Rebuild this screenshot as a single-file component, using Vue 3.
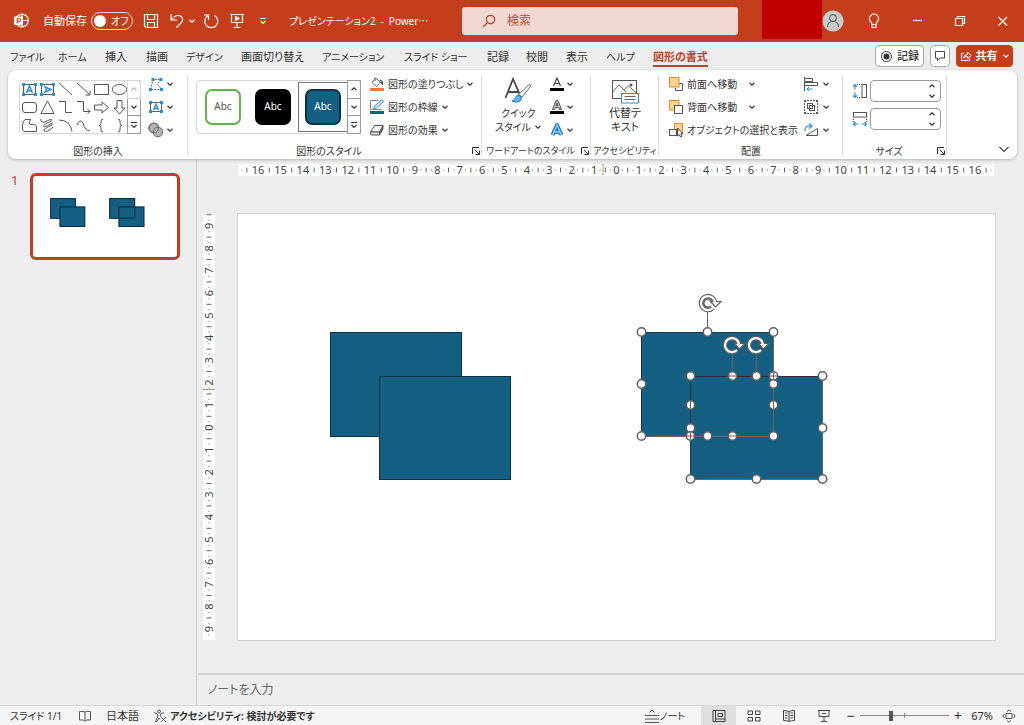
<script setup>
import { ref } from 'vue'

const autosave = ref(false)
const search = ref('')
const shapeHeight = ref('')
const shapeWidth = ref('')
const zoom = ref(38)

const tabs = [
  { name: 'ファイル', kana: true },
  { name: 'ホーム', kana: true },
  { name: '挿入' },
  { name: '描画' },
  { name: 'デザイン', kana: true },
  { name: '画面切り替え' },
  { name: 'アニメーション', kana: true },
  { name: 'スライド ショー', kana: true },
  { name: '記録' },
  { name: '校閲' },
  { name: '表示' },
  { name: 'ヘルプ', kana: true },
  { name: '図形の書式', active: true },
]

const shapeIcons = [
  { name: 'テキスト ボックス', box: 'A' },
  { name: '縦書きテキスト ボックス', box: 'V' },
  { name: '線', d: 'M2 2L15 14' },
  { name: '線矢印', d: 'M2 2L15 14M15 9.500V14H10.500' },
  { name: '正方形/長方形', d: 'M1.500 3.500H15.500V13.500H1.500Z' },
  { name: '楕円', d: 'M1.500 8.500A7 5 0 1 0 15.500 8.500A7 5 0 1 0 1.500 8.500Z' },
  { name: '角丸四角形', d: 'M4 3.500H13Q15.500 3.500 15.500 6V11Q15.500 13.500 13 13.500H4Q1.500 13.500 1.500 11V6Q1.500 3.500 4 3.500Z' },
  { name: '二等辺三角形', d: 'M8.500 2L15 14.500H2Z' },
  { name: 'カギ線コネクタ', d: 'M2 2.500H8.500V13.500H15' },
  { name: 'カギ線矢印コネクタ', d: 'M2 2.500H8.500V12.500H15M12.500 10L15 12.500L12.500 15' },
  { name: '右矢印', d: 'M1.500 6H9V3L15.500 8.500L9 14V11H1.500Z' },
  { name: '下矢印', d: 'M6 1.500H11V9H14L8.500 15L3 9H6Z' },
  { name: 'フリーフォーム', d: 'M4 2.500H9.500Q6.500 7 10 7.500Q15.500 7 15.500 10V14.500H4Q1.500 14.500 1.500 12V8Q1.500 5 4 2.500Z' },
  { name: 'フリーハンド', d: 'M2 2Q1 6 6 5Q11 2 12.500 2.500Q14 4 8 6Q3 9 5 10Q9 9 12 6.500Q14 6 13 8Q4 12 5 14Q8 16 14 10' },
  { name: '円弧', d: 'M2 3Q13 3 15 14.500' },
  { name: '曲線', d: 'M2 8Q5 1 8 6Q10 14 15 14' },
  { name: '左中かっこ', d: 'M10 2Q8 2 8 4V6Q8 8.500 6 8.500Q8 8.500 8 11V13Q8 15 10 15' },
  { name: '右中かっこ', d: 'M7 2Q9 2 9 4V6Q9 8.500 11 8.500Q9 8.500 9 11V13Q9 15 7 15' },
]

const baseShapes = [
  { x: 93, y: 119, w: 131, h: 104 },
  { x: 142, y: 163, w: 131, h: 103 },
  { x: 404, y: 119, w: 132, h: 104 },
  { x: 453, y: 163, w: 132, h: 103 },
  { x: 453, y: 163, w: 83, h: 60 },
]

const handles = [
  [404, 119], [470, 119], [536, 119], [404, 171], [404, 223],
  [453, 163], [495, 163, 'h'], [519, 163], [536, 163, 'p'], [536, 171], [585, 163],
  [453, 192, 'v'], [536, 192, 'v'], [453, 215], [453, 223, 'p'], [470, 223],
  [495, 223, 'h'], [536, 223], [585, 215], [453, 266], [519, 266], [585, 266],
]

const unit = 22.4
const hNumbers = Array.from({ length: 33 }, (_, i) => i - 16)
const vNumbers = Array.from({ length: 19 }, (_, i) => i - 9)
</script>

<template>
  <div class="app" lang="ja">
    <svg class="defs" aria-hidden="true">
      <defs>
        <symbol id="chev" viewBox="0 0 8 8"><path d="M1.500 2.800L4 5.200L6.500 2.800" fill="none" stroke="currentColor" stroke-width="1.200" /></symbol>
        <symbol id="chev-up" viewBox="0 0 8 8"><path d="M1.500 5.200L4 2.800L6.500 5.200" fill="none" stroke="currentColor" stroke-width="1.200" /></symbol>
        <symbol id="more" viewBox="0 0 8 8"><path d="M1 1.500H7M1.500 4L4 6.500L6.500 4" fill="none" stroke="currentColor" stroke-width="1.200" /></symbol>
        <symbol id="launch" viewBox="0 0 10 10"><path d="M1.500 8V1.500H8M4 4L8.500 8.500M8.500 4.500V8.500H4.500" fill="none" stroke="currentColor" /></symbol>
      </defs>
    </svg>

    <header class="title-bar">
      <div class="quick">
        <svg class="logo" width="16" height="16" viewBox="0 0 16 16">
          <circle cx="9" cy="7.500" r="6.300" fill="none" stroke="#fff" stroke-width="1.200" />
          <path d="M9 1.500V14M9 7.500H15" stroke="#fff" stroke-width="1.200" />
          <rect x="1" y="3.500" width="9" height="8.500" rx="1" fill="#fff" />
          <path d="M4.300 10.500V5.500H6A1.500 1.500 0 0 1 6 8.500H4.300" fill="none" stroke="#c43e1c" stroke-width="1.200" />
        </svg>
        <span id="autosave-label" class="autosave">自動保存</span>
        <button class="toggle" role="switch" :aria-checked="autosave" aria-labelledby="autosave-label" @click="autosave = !autosave">
          <span class="knob"></span>{{ autosave ? 'オン' : 'オフ' }}
        </button>
        <button class="q q-save" aria-label="上書き保存">
          <svg width="16" height="16" viewBox="0 0 16 16"><path d="M1.500 1.500H14.500V14.500H3L1.500 13ZM4.500 1.500V6.500H11.500V1.500M4.500 14.500V9.500H11.500V14.500" /></svg>
        </button>
        <button class="q q-undo" aria-label="元に戻す">
          <svg width="16" height="16" viewBox="0 0 16 16"><path d="M2 1V7H8M2 7Q7 1 11.500 3Q15.500 6 12 10L7.500 14.500" /></svg>
        </button>
        <button class="q q-chev" aria-label="元に戻すの一覧"><svg width="8" height="8"><use href="#chev" /></svg></button>
        <button class="q" aria-label="繰り返し">
          <svg width="18" height="16" viewBox="0 0 18 16"><path d="M6 2.500A6.500 6.500 0 1 0 12.500 2.500M2 2H6.500V7" /></svg>
        </button>
        <button class="q" aria-label="先頭から開始">
          <svg width="16" height="16" viewBox="0 0 16 16"><path d="M1 1.500H15M2.500 1.500V9.500H13.500V1.500M8 9.500V14.500M4.500 14.500H11.500" /><path d="M6.500 3.500L10 5.500L6.500 7.500Z" fill="#fff" /></svg>
        </button>
        <button class="q" aria-label="クイック アクセス ツール バーのカスタマイズ"><svg width="8" height="8"><use href="#more" /></svg></button>
        <span class="doc">プレゼンテーション2&ensp;-&ensp;Power⋯</span>
      </div>
      <label class="search">
        <svg width="14" height="14" viewBox="0 0 14 14"><circle cx="8.500" cy="5.500" r="4.200" /><path d="M5.500 8.500L1 13" /></svg>
        <input v-model="search" type="text" placeholder="検索" aria-label="検索" />
      </label>
      <div class="account">
        <span class="block"></span>
        <button class="avatar" aria-label="アカウント">
          <svg width="22" height="22" viewBox="0 0 22 22"><circle cx="11" cy="11" r="10.500" fill="#c9cbcb" /><g fill="none" stroke="#666" stroke-width="1.200"><circle cx="11" cy="8" r="3.300" /><path d="M5.500 17Q5.500 11.500 11 11.500Q16.500 11.500 16.500 17" /></g></svg>
        </button>
        <button class="win" aria-label="ヒント">
          <svg width="14" height="16" viewBox="0 0 14 16"><path d="M5 11.500Q5 9.500 3.500 8.500A4.500 4.500 0 1 1 10.500 8.500Q9 9.500 9 11.500ZM5 11.500V14.500H9V11.500" /></svg>
        </button>
        <button class="win" aria-label="最小化"><svg width="12" height="12" viewBox="0 0 12 12"><path d="M2 5.500H11" /></svg></button>
        <button class="win" aria-label="元に戻す (縮小)"><svg width="12" height="12" viewBox="0 0 12 12"><path d="M1.500 3.500H8.500V10.500H1.500ZM3.500 3.500V1.500H10.500V8.500H8.500" /></svg></button>
        <button class="win" aria-label="閉じる"><svg width="12" height="12" viewBox="0 0 12 12"><path d="M1.500 2L10 10.500M10 2L1.500 10.500" /></svg></button>
      </div>
    </header>

    <div class="tab-row">
      <nav class="tabs">
        <a v-for="t in tabs" :key="t.name" href="#" :class="{ active: t.active, kana: t.kana }">{{ t.name }}</a>
      </nav>
      <div class="tab-actions">
        <button class="pill"><svg width="13" height="13" viewBox="0 0 13 13"><circle cx="6.500" cy="6.500" r="5" fill="none" stroke="#333" /><circle cx="6.500" cy="6.500" r="3" fill="#333" /></svg>記録</button>
        <button class="pill comment" aria-label="コメント"><svg width="12" height="12" viewBox="0 0 12 12"><path d="M1.500 1.500H10.500V8H6L3.500 10.500V8H1.500Z" fill="none" stroke="#444" /></svg></button>
        <button class="pill share"><svg width="12" height="12" viewBox="0 0 12 12"><path d="M4 3.500H1.500V10.500H9.500V8M3.500 8Q4 4.500 7.500 4.500V2L11 5.500L7.500 8.500V6.500Q5 6.500 3.500 8Z" fill="none" stroke="#fff" /></svg>共有<svg width="8" height="8"><use href="#chev" /></svg></button>
      </div>
    </div>

    <section class="ribbon">
      <div class="group">
        <div class="group-body insert">
          <div class="gallery">
            <div class="shape-grid">
              <button v-for="s in shapeIcons" :key="s.name" :aria-label="s.name">
                <svg width="17" height="17" viewBox="0 0 17 17" fill="none" stroke="#555">
                  <template v-if="s.box">
                    <rect x="2.500" y="3.500" width="12" height="10" />
                    <path :d="s.box === 'A' ? 'M5.500 12L8.500 5L11.500 12M6.500 10H10.500' : 'M5 5.500L12 8.500L5 11.500M7 6.500V10.500'" stroke="#2b8fd6" stroke-width="1.500" />
                    <path d="M1 2H4V5H1ZM13 2H16V5H13ZM1 12H4V15H1ZM13 12H16V15H13Z" fill="#2b8fd6" stroke="none" />
                  </template>
                  <path v-else :d="s.d" />
                </svg>
              </button>
            </div>
            <div class="scroller">
              <button class="dim" aria-label="前の図形"><svg width="8" height="8"><use href="#chev-up" /></svg></button>
              <button aria-label="次の図形"><svg width="8" height="8"><use href="#chev" /></svg></button>
              <button aria-label="すべての図形"><svg width="8" height="8"><use href="#more" /></svg></button>
            </div>
          </div>
          <div class="stack">
            <button class="cmd" aria-label="図形の編集">
              <svg width="16" height="16" viewBox="0 0 16 16"><path d="M2.500 13.500L5 3.500H13L9.500 8L13.500 13.500Z" fill="none" stroke="#666" stroke-dasharray="2 1" /><path d="M3.500 2H6.500V5H3.500ZM11.500 2H14.500V5H11.500ZM1 12H4V15H1ZM12 12H15V15H12Z" fill="#2b8fd6" /></svg>
              <svg width="8" height="8"><use href="#chev" /></svg>
            </button>
            <button class="cmd" aria-label="テキスト ボックスの描画">
              <svg width="16" height="16" viewBox="0 0 16 16"><rect x="2.500" y="3.500" width="11" height="9" fill="none" stroke="#666" /><path d="M5.500 11L8 5L10.500 11M6.500 9.500H9.500" fill="none" stroke="#2b8fd6" stroke-width="1.400" /><path d="M1 2H4V5H1ZM12 2H15V5H12ZM1 11H4V14H1ZM12 11H15V14H12Z" fill="#2b8fd6" /></svg>
              <svg width="8" height="8"><use href="#chev" /></svg>
            </button>
            <button class="cmd" aria-label="図形の結合">
              <svg width="16" height="16" viewBox="0 0 16 16" fill="#b5b5b5" stroke="#666"><circle cx="5.800" cy="6" r="4.800" /><circle cx="10" cy="10" r="4.800" /><circle cx="5.800" cy="6" r="4.800" fill="none" /></svg>
              <svg width="8" height="8"><use href="#chev" /></svg>
            </button>
          </div>
        </div>
        <div class="group-label"><span>図形の挿入</span></div>
      </div>

      <div class="group">
        <div class="group-body styles">
          <div class="gallery style-gallery">
            <button class="swatch"><span class="chip outline">Abc</span></button>
            <button class="swatch"><span class="chip black">Abc</span></button>
            <button class="swatch selected"><span class="chip teal">Abc</span></button>
            <div class="scroller">
              <button aria-label="前のスタイル"><svg width="8" height="8"><use href="#chev-up" /></svg></button>
              <button aria-label="次のスタイル"><svg width="8" height="8"><use href="#chev" /></svg></button>
              <button aria-label="すべてのスタイル"><svg width="8" height="8"><use href="#more" /></svg></button>
            </div>
          </div>
          <div class="stack">
            <button class="cmd">
              <svg width="16" height="16" viewBox="0 0 16 16"><rect x="1" y="12" width="14" height="3" fill="#ed7d31" /><path d="M6.500 2L11.500 6L7.500 10.500L3 6.500ZM6 5V1.500" fill="#f2f2f2" stroke="#666" /><path d="M11.500 4Q14.500 5 13.500 9Z" fill="#1f5c82" stroke="#1f5c82" /></svg>
              図形の塗りつぶし<svg width="8" height="8"><use href="#chev" /></svg>
            </button>
            <button class="cmd">
              <svg width="16" height="16" viewBox="0 0 16 16"><path d="M9 1.500H1.500V10.500H13" fill="none" stroke="#888" /><rect x="1" y="12" width="14" height="3" fill="#156082" /><path d="M4.500 9.500L6 6.500L12.500 1L14.500 2.500L7.500 9Z" fill="#cfe6f8" stroke="#2b8fd6" /></svg>
              図形の枠線<svg width="8" height="8"><use href="#chev" /></svg>
            </button>
            <button class="cmd">
              <svg width="16" height="16" viewBox="0 0 16 16" stroke="#555" stroke-linejoin="round"><path d="M1.500 10L5.500 3.500H14L10.500 10Z" fill="#fff" /><path d="M1.500 10H10.500V13H2.500Q1.500 13 1.500 12Z" fill="#ddd" /><path d="M10.500 10L14 3.500V7L10.500 13Z" fill="#777" /></svg>
              図形の効果<svg width="8" height="8"><use href="#chev" /></svg>
            </button>
          </div>
        </div>
        <div class="group-label"><span>図形のスタイル</span><button aria-label="図形の書式設定"><svg width="10" height="10"><use href="#launch" /></svg></button></div>
      </div>

      <div class="group">
        <div class="group-body wordart">
          <button class="big">
            <svg width="30" height="28" viewBox="0 0 30 28"><path d="M2.500 22L10 3L17.500 20M5 16H15" fill="none" stroke="#444" stroke-width="1.800" /><path d="M15.500 18.500L25 9.500Q28.500 7.500 27.500 10.500L19 21Z" fill="#fff" stroke="#666" /><path d="M9 25Q12 24.500 12.500 21Q14.500 18 17.500 20Q20 23 16.500 25.500Q12.500 27 9 25Z" fill="#6cb2e8" stroke="#1e78c2" /></svg>
            <span>クイック</span><span>スタイル <svg width="8" height="8"><use href="#chev" /></svg></span>
          </button>
          <div class="stack">
            <button class="cmd" aria-label="文字の塗りつぶし"><svg width="16" height="16" viewBox="0 0 16 16"><path d="M4.500 10L8 2L11.500 10M5.500 7.500H10.500" fill="none" stroke="#444" stroke-width="1.200" /><rect x="1" y="12" width="14" height="3" /></svg><svg width="8" height="8"><use href="#chev" /></svg></button>
            <button class="cmd" aria-label="文字の輪郭"><svg width="16" height="16" viewBox="0 0 16 16"><path d="M3.500 10.500L7 1.500H9L12.500 10.500H10.500L9.800 8.500H6.200L5.500 10.500ZM7 6.500H9L8 3.800Z" fill="#ccc" stroke="#444" stroke-width=".9" /><rect x="1" y="12" width="14" height="3" /></svg><svg width="8" height="8"><use href="#chev" /></svg></button>
            <button class="cmd" aria-label="文字の効果"><svg width="16" height="16" viewBox="0 0 16 16"><path d="M3.500 13L8 3L12.500 13M5 10H11" fill="none" stroke="#1e78c2" stroke-width="4" stroke-linejoin="round" /><path d="M3.500 13L8 3L12.500 13M5 10H11" fill="none" stroke="#9fd0f5" stroke-width="1.300" /></svg><svg width="8" height="8"><use href="#chev" /></svg></button>
          </div>
        </div>
        <div class="group-label tight"><span>ワードアートのスタイル</span><button aria-label="文字の効果の設定"><svg width="10" height="10"><use href="#launch" /></svg></button></div>
      </div>

      <div class="group">
        <div class="group-body alt">
          <button class="big">
            <svg width="28" height="28" viewBox="0 0 28 28"><rect x="1.500" y="4.500" width="24" height="18" fill="#fff" stroke="#555" /><path d="M1.500 16L8 9L15 16M13 14L17.500 10L25.500 17" fill="none" stroke="#666" /><circle cx="20" cy="9" r="1.500" fill="#555" /><rect x="10.500" y="17.500" width="17" height="9.500" fill="#fff" stroke="#2b8fd6" /><path d="M13.500 20.500H24.500M13.500 23.500H24.500" stroke="#666" /></svg>
            <span>代替テ</span><span>キスト</span>
          </button>
        </div>
        <div class="group-label tight"><span>アクセシビリティ</span></div>
      </div>

      <div class="group">
        <div class="group-body arrange">
          <div class="stack">
            <button class="cmd split"><svg width="16" height="16" viewBox="0 0 16 16"><path d="M11 7.500H14.500V14.500H7.500V12" fill="none" stroke="#555" /><rect x="1.500" y="1.500" width="9.500" height="9.500" fill="#fbd38a" stroke="#e8862e" /></svg><span>前面へ移動</span><svg width="8" height="8"><use href="#chev" /></svg></button>
            <button class="cmd split"><svg width="16" height="16" viewBox="0 0 16 16"><rect x="1.500" y="1.500" width="9.500" height="9.500" fill="#fbd38a" stroke="#e8862e" /><rect x="6.500" y="6.500" width="8" height="8" fill="#fff" stroke="#555" /></svg><span>背面へ移動</span><svg width="8" height="8"><use href="#chev" /></svg></button>
            <button class="cmd"><svg width="16" height="16" viewBox="0 0 16 16"><rect x="6.500" y="1.500" width="8" height="9" fill="#fbd38a" stroke="#e8862e" /><rect x="1.500" y="7.500" width="7" height="6" fill="#fff" stroke="#555" /><path d="M9.500 6V14L11.200 12.500L12.500 15L14 14.200L12.800 11.800H15Z" fill="#fff" stroke="#333" stroke-width=".9" /></svg>オブジェクトの選択と表示</button>
          </div>
          <div class="stack">
            <button class="cmd" aria-label="配置"><svg width="16" height="16" viewBox="0 0 16 16" fill="none" stroke="#555"><path d="M1.500 1V15M1.500 2.500H9.500V5.500H1.500M1.500 6.500H14.500V9.500H1.500" /><path d="M9.500 13H4M6 11L4 13L6 15" stroke="#2b8fd6" /></svg><svg width="8" height="8"><use href="#chev" /></svg></button>
            <button class="cmd" aria-label="グループ化"><svg width="16" height="16" viewBox="0 0 16 16" fill="none" stroke="#555"><rect x="4.500" y="4.500" width="5" height="5" /><rect x="6.500" y="6.500" width="5" height="5" /><path d="M1.500 4V12M14.500 4V12M4 1.500H12M4 14.500H12" stroke-dasharray="2 1" /><path d="M1 1H3V3H1ZM13 1H15V3H13ZM1 13H3V15H1ZM13 13H15V15H13Z" fill="#555" stroke="none" /></svg><svg width="8" height="8"><use href="#chev" /></svg></button>
            <button class="cmd" aria-label="回転"><svg width="16" height="16" viewBox="0 0 16 16" fill="none"><path d="M14.500 6.500V13.500H3Z" stroke="#555" /><path d="M2 9Q1 3.500 8.500 4M6 1.500L9 4L6 6.500" stroke="#2b8fd6" stroke-width="1.200" /></svg><svg width="8" height="8"><use href="#chev" /></svg></button>
          </div>
        </div>
        <div class="group-label"><span>配置</span></div>
      </div>

      <div class="group">
        <div class="group-body size">
          <label class="dim-row">
            <svg width="16" height="16" viewBox="0 0 16 16" fill="none"><rect x="10" y="1.500" width="4.500" height="13" stroke="#555" /><path d="M5 1.500H8M5 14.500H8" stroke="#555" stroke-dasharray="1 1" /><path d="M3 1.500V6.500M1 3.500L3 1.500L5 3.500M3 9.500V14.500M1 12.500L3 14.500L5 12.500" stroke="#2b8fd6" stroke-width="1.200" /></svg>
            <span class="spin"><input v-model="shapeHeight" type="text" aria-label="図形の高さ" /><span class="arrows"><svg width="8" height="8"><use href="#chev-up" /></svg><svg width="8" height="8"><use href="#chev" /></svg></span></span>
          </label>
          <label class="dim-row">
            <svg width="16" height="16" viewBox="0 0 16 16" fill="none"><rect x="1.500" y="1.500" width="13" height="4.500" stroke="#555" /><path d="M1.500 8V11M14.500 8V11" stroke="#555" stroke-dasharray="1 1" /><path d="M1.500 13H6.500M3.500 11L1.500 13L3.500 15M9.500 13H14.500M12.500 11L14.500 13L12.500 15" stroke="#2b8fd6" stroke-width="1.200" /></svg>
            <span class="spin"><input v-model="shapeWidth" type="text" aria-label="図形の幅" /><span class="arrows"><svg width="8" height="8"><use href="#chev-up" /></svg><svg width="8" height="8"><use href="#chev" /></svg></span></span>
          </label>
        </div>
        <div class="group-label"><span>サイズ</span><button aria-label="配置とサイズ"><svg width="10" height="10"><use href="#launch" /></svg></button></div>
      </div>

      <button class="collapse" aria-label="リボンの表示オプション"><svg width="12" height="12" viewBox="0 0 12 12"><path d="M1.500 4L6 8.500L10.500 4" fill="none" stroke="#444" stroke-width="1.200" /></svg></button>
    </section>

    <main class="workspace">
      <aside class="thumbs">
        <span class="num">1</span>
        <button class="thumb" aria-label="スライド 1">
          <svg viewBox="0 0 759 428" fill="#156082" stroke="#0b3347" stroke-width="6">
            <rect v-for="(s, i) in baseShapes" :key="i" :x="s.x" :y="s.y" :width="s.w" :height="s.h" />
          </svg>
        </button>
      </aside>

      <section class="editor">
        <div class="stage">
          <svg class="ruler-h" viewBox="0 0 756 12">
            <rect width="756" height="12" fill="#fff" />
            <g v-for="n in hNumbers" :key="n">
              <text :x="378 + n * unit" y="10">{{ Math.abs(n) }}</text>
              <path :d="`M${378 + (n - 0.5) * unit} 3.500V8.500`" />
              <path v-if="Math.abs(n) < 10" :d="`M${377.5 + (n - 0.26) * unit} 6h1M${377.5 + (n + 0.26) * unit} 6h1`" />
            </g>
            <path d="M747.600 3.500V8.500M3 6H4M752 6H753" />
            <path class="mark" d="M364.500 0V12" />
          </svg>
          <svg class="ruler-v" viewBox="0 0 12 426">
            <rect width="12" height="426" fill="#fff" />
            <g v-for="n in vNumbers" :key="n">
              <text :transform="`translate(10 ${213.5 + n * unit}) rotate(-90)`">{{ Math.abs(n) }}</text>
              <path :d="`M3.500 ${213.5 + (n - 0.5) * unit}H8.500`" />
              <path :d="`M6 ${213 + (n - 0.26) * unit}v1M6 ${213 + (n + 0.26) * unit}v1`" />
            </g>
            <path class="mark" d="M0 175.500H12" />
          </svg>
          <svg class="slide" viewBox="0 0 759 428">
            <rect x=".5" y=".5" width="758" height="427" fill="#fff" stroke="#d2d2d2" />
            <g fill="#156082" stroke="#0b3347">
              <rect v-for="(s, i) in baseShapes" :key="i" :x="s.x + 0.5" :y="s.y + 0.5" :width="s.w" :height="s.h" />
            </g>
            <g fill="none" stroke="#666">
              <rect v-for="(s, i) in baseShapes.slice(2)" :key="i" :x="s.x + 0.5" :y="s.y + 0.5" :width="s.w" :height="s.h" />
              <path d="M470.500 99V119M495.500 140V163M519.500 140V163" />
            </g>
            <g fill="none" stroke="#26343c">
              <path d="M404.500 223V119.500H536M453.500 266V163.500H585" />
            </g>
            <g v-for="(h, i) in handles" :key="i" fill="#fff" stroke="#5e5e5e">
              <circle :cx="h[0] + 0.5" :cy="h[1]" r="4.200" stroke-width="1.500" />
              <path v-if="h[2] === 'h' || h[2] === 'p'" :d="`M${h[0] - 3} ${h[1]}h7`" />
              <path v-if="h[2] === 'v' || h[2] === 'p'" :d="`M${h[0] + 0.5} ${h[1] - 3.5}v7`" />
            </g>
            <g v-for="p in [[471, 90], [495, 132], [519, 132]]" :key="p[0]" :transform="`translate(${p[0]} ${p[1]})`" fill="none">
              <path d="M5 5A7 7 0 1 1 7 0" stroke="#5e5e5e" stroke-width="4.500" />
              <path d="M2.500 -1.500H13L7.500 4Z" fill="#fff" stroke="#5e5e5e" stroke-width="1.200" />
              <path d="M5 5A7 7 0 1 1 7 0" stroke="#fff" stroke-width="2.200" />
              <path v-if="p[0] === 471" d="M2.500 3A4 4 0 1 1 3.500 -1.500" stroke="#5e5e5e" stroke-width="1.500" />
            </g>
          </svg>
        </div>
        <div class="notes">ノートを入力</div>
      </section>
    </main>

    <footer class="status">
      <span class="s-slide">スライド 1/1</span>
      <button class="s-proof" aria-label="スペル チェック"><svg width="14" height="12" viewBox="0 0 14 12" fill="none" stroke="#555"><path d="M7 2V11M7 2Q5.500 1 1.500 1.500V10H5.500L7 11.500L8.500 10H12.500V1.500Q8.500 1 7 2" /></svg></button>
      <button class="s-lang">日本語</button>
      <button class="s-acc"><svg width="14" height="14" viewBox="0 0 14 14" fill="none" stroke="#555"><circle cx="6" cy="2.500" r="1.500" /><path d="M1 3.500L4.500 5V8L2.500 12.500H4L6 9L7 10.500M11 3.500L7.500 5V7.500M8 8L13 13M13 8L8 13" /></svg>アクセシビリティ: 検討が必要です</button>
      <span class="fill"></span>
      <button class="s-note"><svg width="16" height="16" viewBox="0 0 16 16" fill="none" stroke="#555"><path d="M5.500 4.500L8 2L10.500 4.500M1 7.500H15M1 11H15M1 14.500H15" /></svg>ノート</button>
      <div class="views">
        <button class="view on" aria-label="標準"><svg width="14" height="12" viewBox="0 0 14 12" fill="none" stroke="#444"><path d="M1 .5H13V11.500H1ZM3.500 .5V11.500M3.500 9H13M6 3.500H10.500V6.500H6Z" /></svg></button>
        <button class="view" aria-label="スライド一覧"><svg width="14" height="12" viewBox="0 0 14 12" fill="none" stroke="#444"><path d="M1 1H5.500V4.500H1ZM8.500 1H13V4.500H8.500ZM1 7.500H5.500V11H1ZM8.500 7.500H13V11H8.500Z" /></svg></button>
        <button class="view" aria-label="閲覧表示"><svg width="14" height="12" viewBox="0 0 14 12" fill="none" stroke="#444"><path d="M7 2V11.500M7 1.500Q4 .5 1.500 .5V10.500Q5 10.500 7 11.500Q9 10.500 12.500 10.500V.5Q9 .5 7 1.500M3 3H5.500M3 5.500H5.500M3 8H5.500M8.500 3H11M8.500 5.500H11M8.500 8H11" /></svg></button>
        <button class="view" aria-label="スライド ショー"><svg width="14" height="12" viewBox="0 0 14 12" fill="none" stroke="#444"><path d="M1 .5H13M2 .5V6.500H12V.5M5 3.500H9M7 6.500V11.500M4 11.500H10" /></svg></button>
      </div>
      <button class="step" aria-label="縮小">−</button>
      <input v-model="zoom" class="zoom" type="range" min="0" max="110" aria-label="ズーム" />
      <button class="step" aria-label="拡大">+</button>
      <button class="percent">67%</button>
      <button class="fit" aria-label="ウィンドウに合わせる"><svg width="14" height="14" viewBox="0 0 14 14" fill="none" stroke="#555"><path d="M4 4.500H10V9.500H4ZM5 2.500L7 .8L9 2.500M5 11.500L7 13.200L9 11.500M2.500 5L.8 7L2.500 9M11.500 5L13.200 7L11.500 9" /></svg></button>
    </footer>
  </div>
</template>

<style>
html, body { margin: 0; background: #ededed; }
</style>

<style scoped>
.app {
  min-height: 100vh;
  display: flex;
  flex-direction: column;
  background: #ededed;
  color: #333;
  font-family: "Noto Sans", "Noto Sans CJK JP", sans-serif;
  font-feature-settings: "palt";
  font-size: 11px;
  line-height: 14px;
  white-space: nowrap;
}
.app *, .app *::before { box-sizing: border-box; }
.defs { position: absolute; width: 0; height: 0; }
svg { flex: none; }
button, input {
  font: inherit;
  font-feature-settings: inherit;
  color: inherit;
  background: none;
  border: 0;
  padding: 0;
  margin: 0;
  min-width: 0;
}
button { display: flex; align-items: center; justify-content: center; white-space: nowrap; }

.title-bar { display: flex; height: 42px; background: #c43e1c; color: #fff; }
.quick { flex: 0 0 462px; display: flex; align-items: center; padding-left: 13px; }
.autosave { margin-left: 14px; width: 48px; }
.toggle { width: 42px; height: 18px; border: 1px solid #f3d6ce; border-radius: 9px; justify-content: flex-start; gap: 5px; padding-left: 2px; margin-right: 1px; font-size: 10px; }
.knob { flex: none; width: 12px; height: 12px; border-radius: 50%; background: #fff; }
.q { width: 26px; height: 30px; }
.q-save { width: 34px; }
.q-undo { width: 18px; }
.q-chev { width: 12px; }
.q svg, .win svg { fill: none; stroke: #fff; stroke-width: 1.2; }
.doc { margin-left: 13px; font-size: 10px; }
.search { flex: 1; align-self: center; height: 28px; display: flex; align-items: center; gap: 11px; padding-left: 20px; background: #f0d7d1; border-radius: 3px; color: #b34a30; }
.search svg { fill: none; stroke: #b5492e; stroke-width: 1.2; }
.search input { flex: 1; outline: none; font-size: 12px; }
.search input::placeholder { color: #b0533d; opacity: 1; }
.account { flex: 0 0 285px; display: flex; align-items: center; padding-left: 24px; }
.block { width: 60px; height: 39px; align-self: flex-start; background: #c00000; }
.avatar { width: 22px; height: 22px; margin-right: 8px; }
.win { width: 43px; height: 42px; }

.tab-row { display: flex; align-items: center; height: 28px; padding: 0 11px 0 10px; }
.tabs { flex: 1; display: grid; grid-template-columns: 48px 47px 41px 40px 55px 81px 82px 83px 39px 40px 40px 47px 1fr; align-items: center; }
.tabs a { color: inherit; text-decoration: none; justify-self: start; padding: 4px 0 1px; border-bottom: 2px solid transparent; }
.tabs .kana { font-size: 10px; }
.tabs .active { color: #b7472a; font-weight: 700; border-color: #b7472a; }
.tab-actions { display: flex; gap: 6px; }
.pill { height: 22px; width: 49px; gap: 4px; background: #fff; border: 1px solid #a8a8a8; border-radius: 4px; font-weight: 500; }
.comment { width: 20px; }
.share { width: 57px; background: #c43e1c; border-color: #c43e1c; color: #fff; font-weight: 700; }

.ribbon {
  display: grid;
  grid-template-columns: 180px 294px 109px 68px 184px 104px 1fr;
  height: 89px;
  margin: 0 7px 0 8px;
  background: #fff;
  border-radius: 8px;
  box-shadow: 0 1px 3px rgba(0, 0, 0, .25);
  position: relative;
  font-size: 10px;
}
.group { display: flex; flex-direction: column; position: relative; }
.group::after { content: ""; position: absolute; right: 0; top: 5px; bottom: 6px; border-right: 1px solid #dcdcdc; }
.group-body { flex: 1; display: flex; align-items: flex-start; padding-top: 3px; }
.group-label { display: flex; align-items: center; height: 19px; padding-bottom: 1px; }
.group-label span { flex: 1; text-align: center; }
.group-label button { width: 12px; height: 12px; }
.tight { font-size: 9px; }
.stack { display: grid; grid-template-rows: 23px 23px 23px; justify-items: start; }
.cmd { gap: 3px; height: 22px; }
.gallery { display: flex; margin-top: 7px; height: 54px; border: 1px solid #d6d6d6; border-radius: 4px; }
.shape-grid { display: grid; grid-template-columns: repeat(6, 18px); grid-template-rows: repeat(3, 18px); align-content: center; }
.scroller { width: 14px; display: flex; flex-direction: column; margin: -1px; }
.scroller button { flex: 1; border: 1px solid #9a9a9a; }
.scroller button + button { border-top: 0; }
.scroller .dim { color: #b5b5b5; border-color: #d6d6d6; }
.insert { padding-left: 11px; gap: 7px; }
.insert .cmd { gap: 2px; }
.styles { padding-left: 8px; gap: 8px; }
.style-gallery { padding-left: 1px; }
.swatch { width: 50px; height: 50px; margin-top: 1px; }
.selected { border: 1px solid #777; }
.chip { width: 36px; height: 36px; border: 2px solid #5fb548; border-radius: 7px; display: grid; place-items: center; padding-bottom: 3px; }
.chip.outline { color: #555; }
.chip.black { background: #000; border-color: #000; color: #fff; }
.chip.teal { background: #156082; border-color: #0b3347; color: #fff; }
.big { flex-direction: column; justify-content: flex-start; padding-top: 3px; }
.big svg + span { margin-top: 2px; }
.wordart { padding-left: 13px; gap: 7px; }
.wordart .cmd { gap: 1px; }
.alt { justify-content: center; font-size: 11px; }
.arrange { padding-left: 9px; gap: 12px; }
.arrange .split span { width: 58px; text-align: left; }
.arrange .stack:first-child { width: 123px; }
.size { flex-direction: column; gap: 6px; padding: 10px 0 0 9px; }
.dim-row { display: flex; align-items: center; gap: 2px; }
.spin { display: flex; align-items: center; width: 71px; height: 22px; border: 1px solid #9a9a9a; border-radius: 4px; padding-right: 4px; }
.spin input { flex: 1; width: 0; padding-left: 4px; }
.arrows { display: flex; flex-direction: column; gap: 2px; }
.collapse { align-self: end; justify-self: end; width: 18px; height: 18px; margin: 0 4px 3px 0; }

.workspace { flex: 1; display: grid; grid-template-columns: 197px 1fr; }
.thumbs { display: flex; align-items: flex-start; padding: 14px 0 0 11px; border-right: 1px solid #cfcfcf; }
.num { width: 19px; font-size: 13px; color: #c43e1c; }
.thumb { width: 150px; border: 3px solid #c43e1c; border-radius: 6px; background: #fff; }
.thumb svg { display: block; width: 100%; }
.editor { display: flex; flex-direction: column; padding-left: 1px; }
.stage { flex: 1; display: grid; grid-template-columns: 12px 1fr; grid-template-rows: 12px auto; column-gap: 22px; row-gap: 37px; padding: 5px 28px 32px 5px; align-content: start; }
.ruler-h { grid-column: 2; width: 100%; height: 12px; overflow: visible; }
.ruler-v { grid-row: 2; width: 12px; height: 100%; overflow: visible; }
.slide { grid-row: 2; grid-column: 2; width: 100%; display: block; }
.ruler-h text, .ruler-v text { font-size: 11px; fill: #444; text-anchor: middle; }
.ruler-h path, .ruler-v path { stroke: #666; }
.ruler-h .mark, .ruler-v .mark { stroke: #e05a3a; stroke-dasharray: 2 1; }
.notes { height: 32px; border-top: 2px solid #d2d2d2; padding: 8px 10px; font-size: 12px; color: #666; }

.status { display: flex; align-items: center; height: 20px; background: #f4f4f4; border-top: 1px solid #d6d6d6; padding: 0 5px 0 10px; font-size: 10px; }
.status button { height: 19px; }
.s-slide { width: 68px; }
.status .s-proof { width: 14px; margin-right: 14px; }
.status .s-lang { margin-right: 14px; font-size: 11px; }
.status .s-acc { gap: 3px; font-weight: 600; }
.fill { flex: 1; }
.status .s-note { margin-right: 16px; }
.views { display: flex; margin-right: 3px; }
.view { width: 35px; }
.status .on { background: #dedede; }
.status .step { width: 14px; font-size: 14px; }
.zoom { appearance: none; width: 89px; height: 16px; margin: 0 2px; background: linear-gradient(#888, #888) center / 100% 1px no-repeat, linear-gradient(#888, #888) center / 1px 5px no-repeat; }
.zoom::-webkit-slider-thumb { appearance: none; width: 4px; height: 10px; background: #555; }
.status .percent { width: 34px; font-size: 11px; }
.status .fit { width: 20px; }
</style>
